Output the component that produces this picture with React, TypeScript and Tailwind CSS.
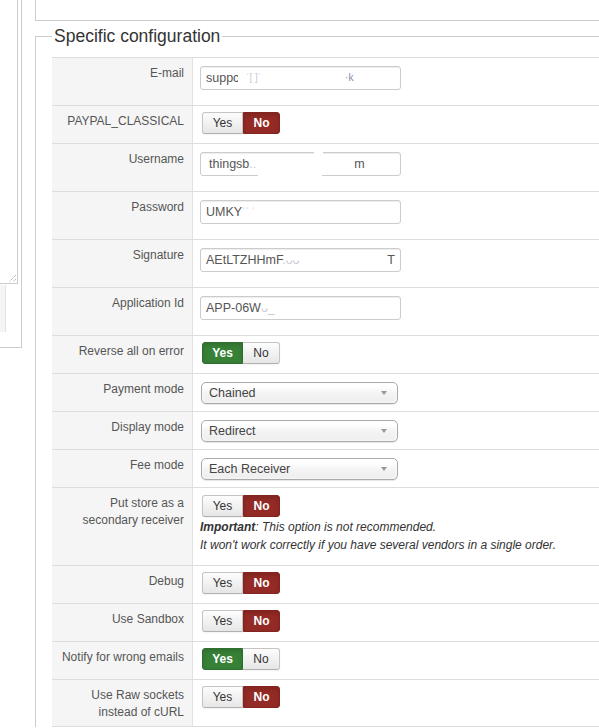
import React from "react";

type YesNo = "yes" | "no";

function Toggle({ value, className = "" }: { value: YesNo; className?: string }) {
  const yesCls =
    value === "yes"
      ? "w-[41px] h-[22px] text-center rounded-l-[3px] border border-[#2e6e2f] bg-[#378137] text-white font-bold shadow-[inset_0_2px_4px_rgba(0,0,0,0.15)]"
      : "w-[41px] h-[22px] text-center rounded-l-[3px] border border-[#c4c4c4] border-b-[#b0b0b0] bg-[linear-gradient(#fdfdfd,#e6e6e6)] text-[#333] shadow-[inset_0_1px_0_rgba(255,255,255,0.2),0_1px_2px_rgba(0,0,0,0.05)]";
  const noCls =
    value === "no"
      ? "w-[37px] h-[22px] text-center rounded-r-[3px] border border-[#832420] bg-[#942a25] text-white font-bold shadow-[inset_0_2px_4px_rgba(0,0,0,0.15)]"
      : "w-[37px] h-[22px] text-center rounded-r-[3px] border border-l-0 border-[#c4c4c4] border-b-[#b0b0b0] bg-[linear-gradient(#fdfdfd,#e6e6e6)] text-[#333] shadow-[inset_0_1px_0_rgba(255,255,255,0.2),0_1px_2px_rgba(0,0,0,0.05)]";
  return (
    <div className={`flex ml-[2px] text-[12px] leading-[20px] ${className}`}>
      <div className={yesCls}>Yes</div>
      <div className={noCls}>No</div>
    </div>
  );
}

function TextBox({ children, className = "" }: { children: React.ReactNode; className?: string }) {
  return (
    <div
      className={`relative flex items-center h-[24px] w-[201px] border border-[#ccc] rounded-[3px] bg-white px-[5px] text-[12.5px] leading-[22px] text-[#555] shadow-[inset_0_1px_1px_rgba(0,0,0,0.075)] whitespace-nowrap ${className}`}
    >
      {children}
    </div>
  );
}

function Select({ value }: { value: string }) {
  return (
    <div className="relative flex items-center ml-[1px] h-[22px] w-[197px] border border-[#aaa] rounded-[5px] bg-[linear-gradient(#ffffff_20%,#f4f4f4_50%,#eeeeee)] pl-[7px] text-[12.5px] leading-[20px] text-[#444] shadow-[inset_0_0_3px_#fff,0_1px_1px_rgba(0,0,0,0.1)]">
      <span>{value}</span>
      <svg className="absolute right-[10px] top-[8px]" width="6" height="4" viewBox="0 0 6 4">
        <path d="M0 0H6L3 4Z" fill="#999" />
      </svg>
    </div>
  );
}

function Row({
  label,
  rowClass,
  cellClass,
  children,
}: {
  label: React.ReactNode;
  rowClass: string;
  cellClass: string;
  children: React.ReactNode;
}) {
  return (
    <div className={`flex border-t border-[#ddd] ${rowClass}`}>
      <div className="w-[141px] shrink-0 bg-[#f5f5f5] border-r border-[#e2e2e2] text-right pr-[8px] pt-[7px] text-[12px] leading-[17px] text-[#555]">
        {label}
      </div>
      <div className={`flex-1 pl-[7px] ${cellClass}`}>{children}</div>
    </div>
  );
}

function Faint({ children, className = "" }: { children: React.ReactNode; className?: string }) {
  return <span className={`text-[#c9c9d4] ${className}`}>{children}</span>;
}

export default function App() {
  return (
    <div className="w-[599px] h-[728px] overflow-hidden bg-white font-['Liberation_Sans',Arial,sans-serif]">
      <div className="flex">
        {/* side panel with a textarea */}
        <div className="w-[22px] h-[348px] shrink-0 border-r border-b border-[#ccc] flex flex-col">
          <div className="relative w-[18px] h-[284px] border-r border-b border-[#ccc] bg-white">
            <svg className="absolute right-[1px] bottom-[1px]" width="8" height="8" viewBox="0 0 8 8">
              <path d="M8 1L1 8M8 5L5 8" stroke="#9a9a9a" strokeWidth="1" strokeDasharray="1 1" />
            </svg>
          </div>
          <div className="mt-[1px] w-[6px] h-[47px] bg-[#f5f5f5] border-r border-[#e2e2e2]" />
        </div>

        <div className="ml-[13px] flex-1 min-w-0">
          {/* end of the previous fieldset */}
          <div className="h-[21px] border-l border-b border-[#ccc]" />

          <fieldset className="mt-[5px] border-l border-t border-[#ccc] pl-[16px] pt-[11px] min-w-0">
            <legend className="px-[2px] text-[17.5px] leading-[20px] text-[#333]">Specific configuration</legend>

            <div className="flex flex-col">
              <Row label="E-mail" rowClass="h-[48px]" cellClass="pt-[8px]">
                <TextBox>
                  <span>supp</span>
                  <span className="inline-block w-[5px] overflow-hidden">c</span>
                  <Faint className="ml-[8px] text-[10px]">ˈ[ ]ˈ</Faint>
                  <span className="ml-[84px] text-[10px] text-[#8a8aa8]">·k</span>
                </TextBox>
              </Row>

              <Row label="PAYPAL_CLASSICAL" rowClass="h-[38px]" cellClass="pt-[6px]">
                <Toggle value="no" />
              </Row>

              <Row label="Username" rowClass="h-[48px]" cellClass="pt-[8px]">
                <TextBox className="pl-[8px]">
                  <span>thingsb</span>
                  <Faint>..</Faint>
                  <span className="ml-[98px]">m</span>
                  <div className="absolute left-[57px] top-[2px] w-[64px] h-[24px] bg-white" />
                  <div className="absolute left-[113px] top-[-2px] w-[9px] h-[4px] bg-white" />
                </TextBox>
              </Row>

              <Row label="Password" rowClass="h-[48px]" cellClass="pt-[8px]">
                <TextBox>
                  <span>UMKY</span>
                  <Faint className="text-[10px]">ˈˈ ˈ</Faint>
                </TextBox>
              </Row>

              <Row label="Signature" rowClass="h-[48px]" cellClass="pt-[8px]">
                <TextBox className="justify-between">
                  <span>
                    AEtLTZHHmF<Faint>.ᴗᴗ</Faint>
                  </span>
                  <span>T</span>
                </TextBox>
              </Row>

              <Row label="Application Id" rowClass="h-[48px]" cellClass="pt-[8px]">
                <TextBox>
                  <span>APP-06W</span>
                  <Faint>ᴗ_</Faint>
                </TextBox>
              </Row>

              <Row label="Reverse all on error" rowClass="h-[38px]" cellClass="pt-[6px]">
                <Toggle value="yes" />
              </Row>

              <Row label="Payment mode" rowClass="h-[38px]" cellClass="pt-[8px]">
                <Select value="Chained" />
              </Row>

              <Row label="Display mode" rowClass="h-[38px]" cellClass="pt-[8px]">
                <Select value="Redirect" />
              </Row>

              <Row label="Fee mode" rowClass="h-[38px]" cellClass="pt-[8px]">
                <Select value="Each Receiver" />
              </Row>

              <Row
                label={
                  <>
                    Put store as a
                    <br />
                    secondary receiver
                  </>
                }
                rowClass="h-[78px]"
                cellClass="pt-[7px]"
              >
                <Toggle value="no" />
                <p className="mt-[1px] text-[12px] leading-[18px] italic text-[#333]">
                  <b>Important</b>: This option is not recommended.
                  <br />
                  It won't work correctly if you have several vendors in a single order.
                </p>
              </Row>

              <Row label="Debug" rowClass="h-[38px]" cellClass="pt-[6px]">
                <Toggle value="no" />
              </Row>

              <Row label="Use Sandbox" rowClass="h-[38px]" cellClass="pt-[6px]">
                <Toggle value="no" />
              </Row>

              <Row label="Notify for wrong emails" rowClass="h-[38px]" cellClass="pt-[6px]">
                <Toggle value="yes" />
              </Row>

              <Row
                label={
                  <>
                    Use Raw sockets
                    <br />
                    instead of cURL
                  </>
                }
                rowClass="h-[48px] border-b"
                cellClass="pt-[6px]"
              >
                <Toggle value="no" />
              </Row>
            </div>
          </fieldset>
        </div>
      </div>
    </div>
  );
}
